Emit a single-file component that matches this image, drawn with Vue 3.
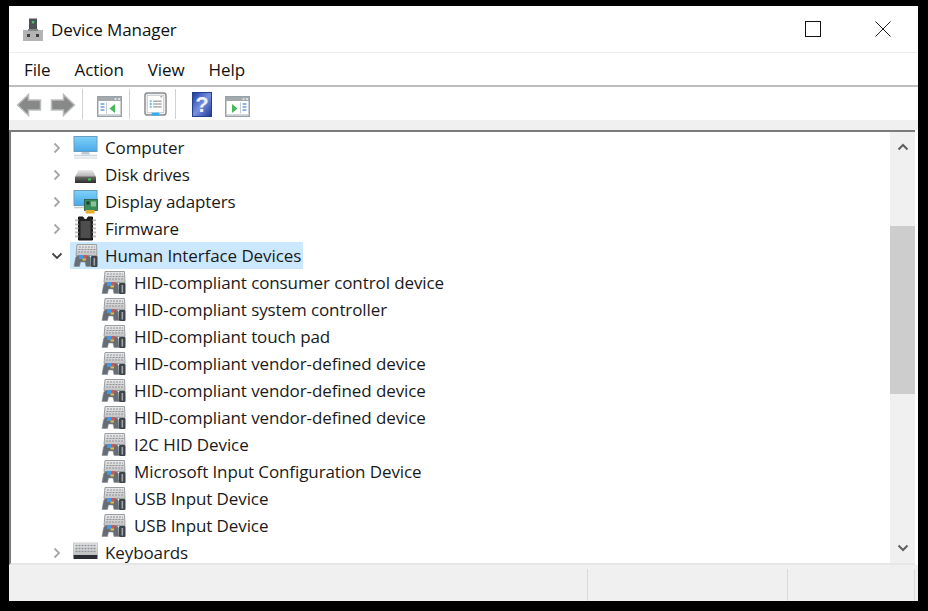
<script setup>
const children = [
  'HID-compliant consumer control device',
  'HID-compliant system controller',
  'HID-compliant touch pad',
  'HID-compliant vendor-defined device',
  'HID-compliant vendor-defined device',
  'HID-compliant vendor-defined device',
  'I2C HID Device',
  'Microsoft Input Configuration Device',
  'USB Input Device',
  'USB Input Device',
]
const rows = [
  { label: 'Computer', icon: 'i-computer', level: 0, caret: 'r' },
  { label: 'Disk drives', icon: 'i-disk', level: 0, caret: 'r' },
  { label: 'Display adapters', icon: 'i-display', level: 0, caret: 'r' },
  { label: 'Firmware', icon: 'i-chip', level: 0, caret: 'r' },
  { label: 'Human Interface Devices', icon: 'i-hid', level: 0, caret: 'd', selected: true },
  ...children.map((label) => ({ label, icon: 'i-hid', level: 1 })),
  { label: 'Keyboards', icon: 'i-keyboard', level: 0, caret: 'r' },
]
const menus = ['File', 'Action', 'View', 'Help']
</script>

<template>
  <div class="page">
    <svg class="defs" width="0" height="0" aria-hidden="true">
      <defs>
        <linearGradient id="g-screen" x1="0" y1="0" x2="0" y2="1">
          <stop offset="0" stop-color="#7fd2f7" />
          <stop offset="1" stop-color="#48a8ea" />
        </linearGradient>
        <linearGradient id="g-disk" x1="0" y1="0" x2="0" y2="1">
          <stop offset="0" stop-color="#ececec" />
          <stop offset="0.48" stop-color="#b4b4b4" />
          <stop offset="0.52" stop-color="#6a6a6a" />
          <stop offset="1" stop-color="#2c2c2c" />
        </linearGradient>
        <linearGradient id="g-key" x1="0" y1="0" x2="0" y2="1">
          <stop offset="0" stop-color="#e9e9e9" />
          <stop offset="1" stop-color="#c2c2c2" />
        </linearGradient>
        <linearGradient id="g-help" x1="0" y1="0" x2="1" y2="1">
          <stop offset="0" stop-color="#1b3a9c" />
          <stop offset="0.5" stop-color="#7a90e0" />
          <stop offset="1" stop-color="#1c3894" />
        </linearGradient>
        <symbol id="i-computer" viewBox="0 0 25 25">
          <rect x="1" y="1.500" width="23" height="15" fill="url(#g-screen)" stroke="#6a9cbf" />
          <path d="M9 17h7l1 2.500H8z" fill="#bcc7cf" />
          <path d="M1 20.500h23" stroke="#cbd5dc" stroke-width="1.600" />
          <path d="M1 23h23" stroke="#dde4e9" stroke-width="1.600" />
        </symbol>
        <symbol id="i-disk" viewBox="0 0 25 25">
          <path d="M5.500 8h14l3.500 7v6H2v-6z" fill="url(#g-disk)" />
          <rect x="15" y="16.500" width="3" height="2" fill="#3fc94f" />
        </symbol>
        <symbol id="i-display" viewBox="0 0 25 25">
          <rect x="1" y="1.500" width="23" height="15" fill="url(#g-screen)" stroke="#6a9cbf" />
          <path d="M1 18.500h11" stroke="#c3ccd3" stroke-width="1.600" />
          <rect x="11.500" y="10.500" width="13" height="11" fill="#3b8a5a" stroke="#2a5a40" stroke-width=".8" />
          <rect x="13.500" y="12.500" width="3" height="3" fill="#1d3d2b" />
          <rect x="18" y="12.500" width="5" height="5" fill="#8ac199" />
          <rect x="12.500" y="21" width="9" height="3.500" fill="#e8ad2c" />
        </symbol>
        <symbol id="i-chip" viewBox="0 0 25 25">
          <path d="M5.500 1h4.500a2.500 2.500 0 0 0 5 0h4.500v23h-14z" fill="#232323" stroke="#111" />
          <path d="M7.500 5h10v17h-10z" fill="#4d4d4d" />
          <g fill="#bbb">
            <rect x="2" y="3.500" width="3.500" height="1.800" />
            <rect x="2" y="7.500" width="3.500" height="1.800" />
            <rect x="2" y="11.500" width="3.500" height="1.800" />
            <rect x="2" y="15.500" width="3.500" height="1.800" />
            <rect x="2" y="19.500" width="3.500" height="1.800" />
            <rect x="19.500" y="3.500" width="3.500" height="1.800" />
            <rect x="19.500" y="7.500" width="3.500" height="1.800" />
            <rect x="19.500" y="11.500" width="3.500" height="1.800" />
            <rect x="19.500" y="15.500" width="3.500" height="1.800" />
            <rect x="19.500" y="19.500" width="3.500" height="1.800" />
          </g>
        </symbol>
        <symbol id="i-hid" viewBox="0 0 25 25">
          <path d="M4 1.500h19.500l.5 11H3z" fill="url(#g-key)" stroke="#9a9fa3" />
          <path d="M6 4h16M5.500 6.500h17M5 9h18" stroke="#8f949a" stroke-width="1.200" stroke-dasharray="2 1" />
          <path d="M1 23.500 2.500 15q.5-2.500 3-2.500h9q2.500 0 3 2.500l.5 8.500h-5l-1-4.500H7.500l-1 4.500z" fill="#666d74" stroke="#8a9096" stroke-width=".6" />
          <rect x="6" y="12" width="4.500" height="4" fill="#3f9be6" />
          <rect x="10.500" y="12" width="3" height="3.500" fill="#d9534f" />
          <rect x="9.500" y="15.500" width="3.500" height="2" fill="#e8b93a" />
          <rect x="18" y="13" width="6.500" height="11" rx="1" fill="#40454b" />
          <rect x="20.500" y="15" width="1.600" height="7.500" fill="#a0a5aa" />
        </symbol>
        <symbol id="i-keyboard" viewBox="0 0 25 25">
          <rect x=".500" y="3" width="24" height="12" fill="url(#g-key)" stroke="#b0b0b0" stroke-width=".6" />
          <path d="M2.500 5.500h20M2.500 8.500h20M2.500 11.500h20" stroke="#8f9499" stroke-width="1.300" stroke-dasharray="2 1" />
          <rect x=".500" y="15" width="24" height="4" fill="#2a2d31" />
        </symbol>
        <symbol id="i-mmc" viewBox="0 0 25 21">
          <rect x=".750" y=".750" width="23.500" height="19.500" fill="#fff" stroke="#98a1a7" stroke-width="1.500" />
          <rect x="1" y="1" width="23" height="4" fill="#a2aab0" />
          <path d="M17.500 3h2M21 3h2" stroke="#eef1f3" stroke-width="1.400" />
          <path d="M2 18.500h21" stroke="#d3d8dc" />
        </symbol>
      </defs>
    </svg>

    <div class="window">
      <header class="titlebar">
        <div class="title">
          <svg class="app-icon" viewBox="0 0 22 24" width="22" height="24">
            <rect x="7" y="1.500" width="8" height="10.500" fill="#4c5257" />
            <rect x="9.800" y="4" width="2.400" height="2.400" fill="#41c466" />
            <path d="M1 13h20v11H1z" fill="#b3b4b3" />
            <rect x="5" y="17" width="3" height="3" fill="#3c3f42" />
            <rect x="14" y="17" width="3" height="3" fill="#3c3f42" />
            <path d="M6 12h10v2H6z" fill="#858889" />
          </svg>
          <span class="title-text">Device Manager</span>
        </div>
        <div class="controls">
          <div class="ctl">
            <svg viewBox="0 0 16 16" width="16" height="16"><rect x=".5" y=".5" width="15" height="15" fill="none" stroke="#111" /></svg>
          </div>
          <div class="ctl">
            <svg viewBox="0 0 16 16" width="16" height="16"><path d="M.5.500l15 15M15.500.500l-15 15" fill="none" stroke="#222" /></svg>
          </div>
        </div>
      </header>

      <nav class="menubar">
        <span v-for="m in menus" :key="m" class="menu">{{ m }}</span>
      </nav>

      <div class="toolbar">
        <svg viewBox="0 0 60 24" width="60" height="24">
          <path d="M1.500 12 12.500 1.500V7h12v10h-12v5.500z" fill="#878888" stroke="#bdbdbd" stroke-width="1.500" />
          <path d="M58.500 12 47.500 1.500V7h-12v10h12v5.500z" fill="#878888" stroke="#bdbdbd" stroke-width="1.500" />
        </svg>
        <span class="sep s1"></span>
        <svg viewBox="0 0 25 21" width="25" height="21">
          <use href="#i-mmc" />
          <path d="M3.500 8h4M3.500 11h4M3.500 14h4" stroke="#6f9fd4" stroke-width="1.600" />
          <path d="M9.500 6.500v11" stroke="#c5ccd1" />
          <path d="M18 8v9l-5.500-4.500z" fill="#46b85a" />
        </svg>
        <span class="sep s2"></span>
        <svg viewBox="0 0 24 26" width="23" height="25">
          <rect x="1" y="1" width="22" height="23" rx="2.500" fill="#eeeeee" stroke="#878c90" stroke-width="1.500" />
          <rect x="3.500" y="3.500" width="17" height="18" fill="#fff" stroke="#c3c7ca" stroke-width=".8" />
          <path d="M17 5h2" stroke="#777" />
          <path d="M6 9.500h2M6 12.500h2M6 15.500h2" stroke="#3b9be0" stroke-width="1.400" />
          <path d="M9.500 9.500h9M9.500 12.500h9M9.500 15.500h9" stroke="#7b7b7b" />
          <rect x="8" y="21.500" width="8" height="3" fill="#34aef0" />
        </svg>
        <span class="sep s3"></span>
        <svg viewBox="0 0 20 25" width="20" height="25">
          <rect x=".5" y=".500" width="19" height="24" fill="url(#g-help)" stroke="#23408f" />
          <text x="10" y="20" text-anchor="middle" class="qmark">?</text>
        </svg>
        <svg class="tb-last" viewBox="0 0 25 21" width="25" height="21">
          <use href="#i-mmc" />
          <path d="M17.500 8h4M17.500 11h4M17.500 14h4" stroke="#6f9fd4" stroke-width="1.600" />
          <path d="M15.500 6.500v11" stroke="#c5ccd1" />
          <path d="M7 8v9l5.500-4.500z" fill="#46b85a" />
        </svg>
      </div>

      <div class="strip"></div>

      <div class="content">
        <div class="tree">
          <div v-for="(r, i) in rows" :key="i" class="row" :class="{ child: r.level === 1 }">
            <span v-if="r.level === 0" class="caret">
              <svg v-if="r.caret === 'r'" viewBox="0 0 10 12" width="10" height="12">
                <path d="M2.500 1.500 7 6l-4.500 4.500" fill="none" stroke="#a6a6a6" stroke-width="1.800" />
              </svg>
              <svg v-else viewBox="0 0 12 10" width="12" height="10">
                <path d="M1.500 2.500 6 7l4.500-4.500" fill="none" stroke="#404040" stroke-width="1.800" />
              </svg>
            </span>
            <span class="item" :class="{ selected: r.selected }">
              <svg class="icon" width="25" height="25"><use :href="'#' + r.icon" /></svg>
              <span class="label">{{ r.label }}</span>
            </span>
          </div>
        </div>
        <div class="scrollbar">
          <div class="sb-btn">
            <svg viewBox="0 0 12 8" width="12" height="8"><path d="M1.500 6.500 6 2l4.500 4.500" fill="none" stroke="#606060" stroke-width="2" /></svg>
          </div>
          <div class="sb-track">
            <div class="sb-thumb"></div>
          </div>
          <div class="sb-btn">
            <svg viewBox="0 0 12 8" width="12" height="8"><path d="M1.500 1.500 6 6l4.500-4.500" fill="none" stroke="#606060" stroke-width="2" /></svg>
          </div>
        </div>
      </div>

      <footer class="statusbar">
        <div class="cell grow"></div>
        <div class="cell mid"></div>
        <div class="cell end"></div>
      </footer>
    </div>
  </div>
</template>

<style>
html, body { margin: 0; background: #000; }
</style>

<style scoped>
.page {
  width: 928px;
  height: 611px;
  background: #000;
  padding: 6px 10px 10px 9px;
  box-sizing: border-box;
  font-family: "Open Sans", "Noto Sans", sans-serif;
  font-size: 17px;
  letter-spacing: -0.1px;
  color: #1a1a1a;
  overflow: hidden;
}
.defs { display: block; width: 0; height: 0; overflow: hidden; }
.window {
  height: 595px;
  background: #fff;
  display: flex;
  flex-direction: column;
}
.titlebar {
  height: 47px;
  flex: none;
  box-sizing: border-box;
  display: flex;
  align-items: center;
  justify-content: space-between;
  border-bottom: 1px solid #ececec;
}
.title { display: flex; align-items: center; padding-left: 13px; gap: 7px; }
.title-text { color: #111; }
.controls { display: flex; }
.ctl { width: 70px; display: flex; justify-content: center; }
.menubar {
  height: 34px;
  flex: none;
  box-sizing: border-box;
  display: flex;
  align-items: center;
  padding-left: 15px;
  gap: 24px;
  border-bottom: 2px solid #bcbcc2;
}
.menu { color: #111; }
.toolbar {
  height: 33px;
  flex: none;
  box-sizing: border-box;
  display: flex;
  align-items: flex-end;
  padding: 0 0 3px 7px;
}
.sep { width: 1px; height: 30px; background: #d0d0d0; margin-bottom: -2px; }
.s1 { margin-left: 6px; margin-right: 14px; }
.s2 { margin-left: 7px; margin-right: 14px; }
.s3 { margin-left: 8px; margin-right: 16px; }
.tb-last { margin-left: 13px; }
.qmark { font: bold 22px "Liberation Sans", sans-serif; fill: #eef1ff; }
.strip { height: 10px; flex: none; background: #f0f0f0; }
.content {
  flex: 1;
  min-height: 0;
  display: flex;
  margin-right: 3px;
  border-top: 2px solid #7b7b7b;
  border-left: 2px solid #7b7b7b;
  border-bottom: 2px solid #e6e6e6;
}
.tree {
  flex: 1;
  min-width: 0;
  overflow: hidden;
  padding-top: 2px;
}
.row { height: 27px; display: flex; align-items: center; padding-left: 37px; }
.row.child { padding-left: 87px; }
.caret { width: 18px; height: 27px; margin-right: 4px; display: flex; align-items: center; justify-content: center; flex: none; }
.item { display: flex; align-items: center; height: 27px; padding: 0 2px 0 3px; gap: 7px; }
.row.child .item { gap: 8px; }
.item.selected { background: #cce8ff; }
.icon { flex: none; }
.label { white-space: nowrap; color: #1a1a1a; }
.scrollbar {
  width: 25px;
  flex: none;
  background: #f0f0f0;
  display: flex;
  flex-direction: column;
}
.sb-btn { height: 30px; flex: none; display: flex; align-items: center; justify-content: center; }
.sb-track { flex: 1; padding-top: 64px; }
.sb-thumb { height: 168px; background: #cdcdcd; }
.statusbar {
  height: 36px;
  flex: none;
  display: flex;
  padding-right: 3px;
  background: #f0f0f0;
}
.cell { border-right: 1px solid #dadada; margin-top: 4px; }
.grow { flex: 1; }
.mid { width: 199px; }
.end { width: 126px; }
</style>
